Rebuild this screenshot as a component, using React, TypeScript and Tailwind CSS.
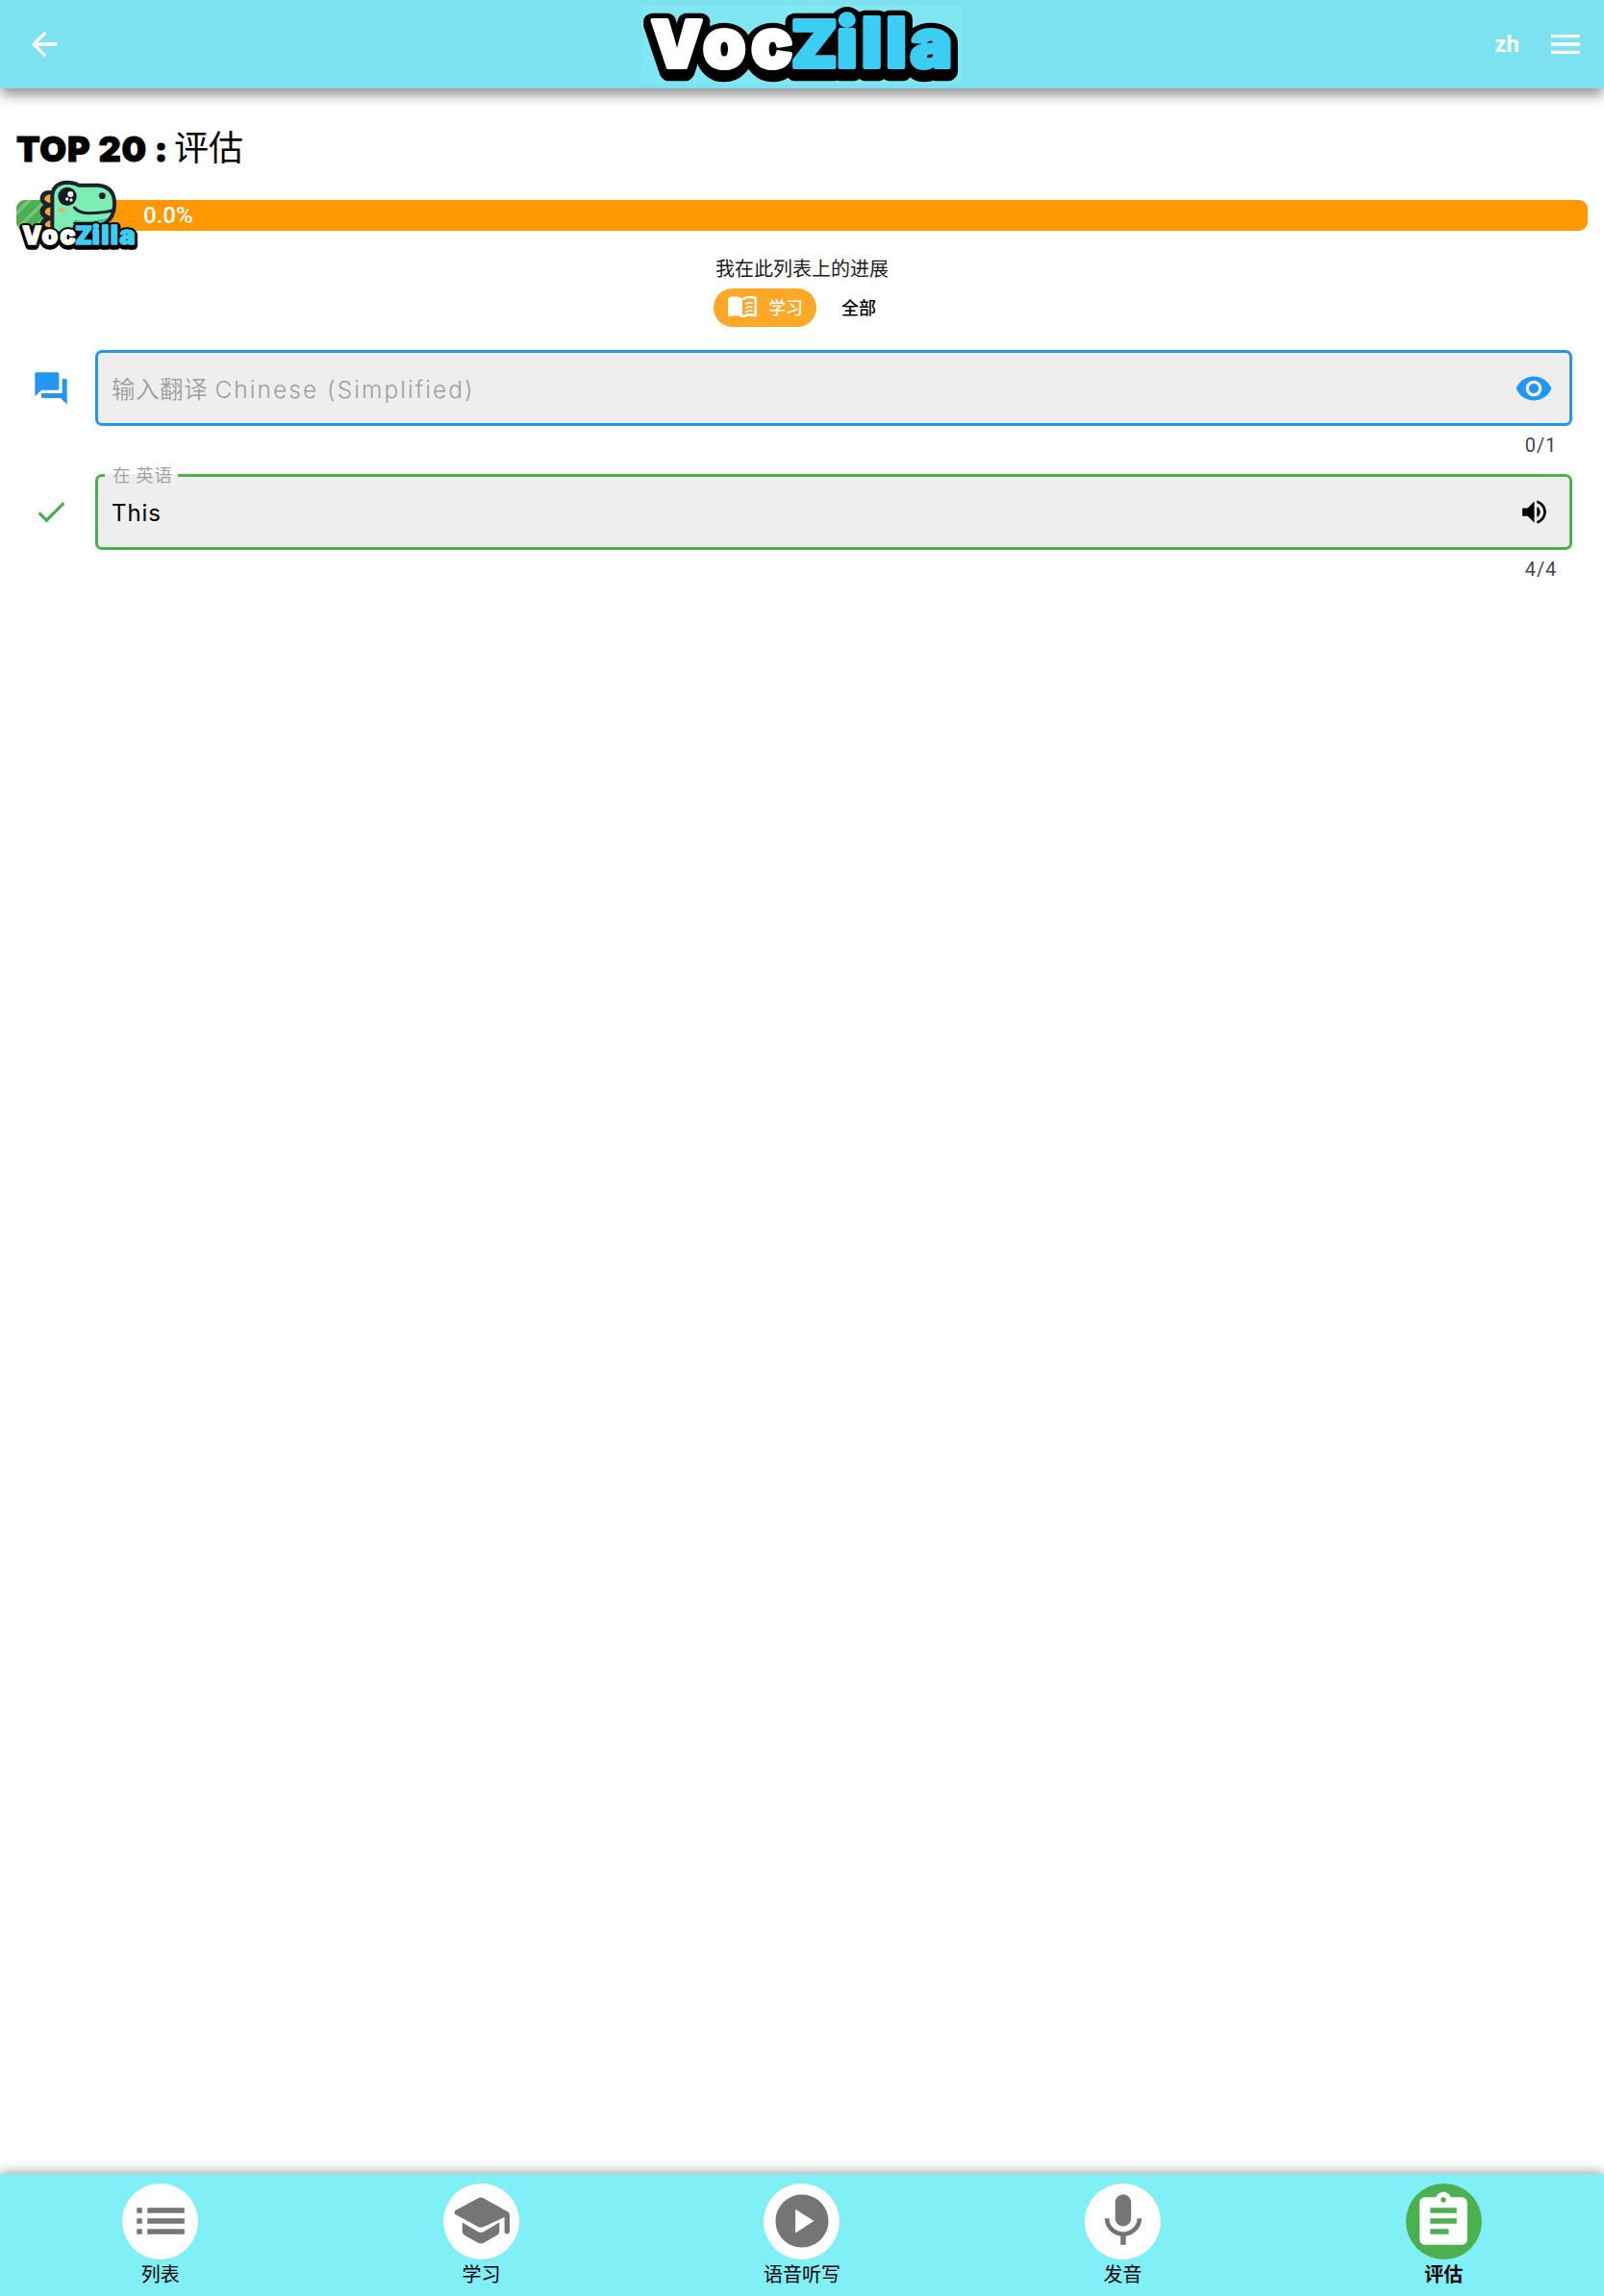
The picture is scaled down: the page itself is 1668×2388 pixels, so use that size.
import type { ReactNode } from "react";
import {
  MdArrowBack,
  MdAssignment,
  MdCheck,
  MdForum,
  MdList,
  MdMenu,
  MdMic,
  MdPlayCircle,
  MdRemoveRedEye,
  MdVolumeUp,
} from "react-icons/md";

function Wordmark({ id }: { id: string }) {
  return (
    <g fontFamily="Inter, sans-serif" fontWeight={900} strokeLinejoin="round">
      <defs>
        <g id={id + "-voc"}>
          <text y="209" fontSize="202">
            <tspan x="111">V</tspan>
            <tspan fontSize="213" x="273 424">oc</tspan>
          </text>
        </g>
        <g id={id + "-zilla"}>
          <text y="209" fontSize="202" transform="translate(548) scale(1.03 1) translate(-548)">
            <tspan x="548">Z</tspan>
            <tspan fontSize="213" x="686 761 835 909">illa</tspan>
          </text>
        </g>
        <g id={id + "-all"}>
          <use href={"#" + id + "-voc"} />
          <use href={"#" + id + "-zilla"} />
        </g>
      </defs>
      <g fill="#000" stroke="#000" strokeWidth="44">
        <use href={"#" + id + "-all"} x="-6" y="4" />
        <use href={"#" + id + "-all"} x="6" y="4" />
        <use href={"#" + id + "-all"} />
        <use href={"#" + id + "-all"} x="-6" y="16" />
        <use href={"#" + id + "-all"} x="6" y="16" />
        <use href={"#" + id + "-all"} y="22" />
      </g>
      <use href={"#" + id + "-voc"} fill="#fff" stroke="#fff" strokeWidth="12" />
      <use href={"#" + id + "-zilla"} fill="#3bcdf3" stroke="#3bcdf3" strokeWidth="12" />
    </g>
  );
}

function Mascot() {
  return (
    <svg viewBox="0 540 450 252" className="absolute left-[-17px] top-[-28px] h-[84px] w-[150px]">
      <path
        d="M164 600Q134 594 129 617Q128 632 146 639Q129 646 129 660Q130 674 146 681Q130 687 130 702L134 722H166Z"
        fill="#1b2230"
        stroke="#1b2230"
        strokeWidth="9"
        strokeLinejoin="round"
      />
      <g fill="#f9a72f">
        <path d="M159 605Q137 610 139 622Q143 631 159 634Z" />
        <path d="M159 646Q139 652 140 662Q144 671 159 675Z" />
        <path d="M159 686Q140 692 140 703L159 716Z" />
      </g>
      <path
        d="M163 728V612Q164 573 207 569Q231 569 245 578H306Q360 582 357 641Q356 680 325 698Q311 705 295 706V728Z"
        fill="#7cedb3"
        stroke="#1b2230"
        strokeWidth="12"
        strokeLinejoin="round"
      />
      <path d="M232 686Q280 697 335 680Q317 696 290 698H232Z" fill="#35b985" />
      <path d="M229 690H300" stroke="#1b2230" strokeWidth="6" transform="translate(0 6)" />
      <path d="M232 648Q246 664 274 665Q318 665 350 657" fill="none" stroke="#1b2230" strokeWidth="9" strokeLinecap="round" />
      <ellipse cx="210" cy="613" rx="29" ry="29" fill="#111a24" />
      <circle cx="220" cy="606" r="9" fill="#fff" />
      <circle cx="209" cy="621" r="5" fill="#fff" />
      <circle cx="222" cy="624" r="5" fill="#e6f6ff" />
      <circle cx="319" cy="611" r="10" fill="#1b2230" />
      <ellipse cx="193" cy="656" rx="10" ry="7" fill="#f5ae4e" transform="rotate(15 193 656)" />
      <g transform="translate(28.4 685) scale(.3747)">
        <Wordmark id="small" />
      </g>
    </svg>
  );
}

function SchoolIcon() {
  return (
    <svg viewBox="-33 -33 66 66" className="size-[66px]" fill="currentColor">
      <path d="M-3.2-23.5Q0-25.3 3.2-23.5L28-9.8Q30-8.5 30-6.5V10.6Q30 13.4 27.3 13.4Q24.6 13.4 24.6 10.6V-4L3.2 5.8Q0 7.6-3.2 5.8L-26-6.4Q-29-8.7-26-11.2Z M24.6-5V-4L3 6.2Z" />
      <path d="M-19.3 1.6L-3.2 10.9Q0 12.7 3.2 10.9L19.3 1.6V10.6Q19.3 13.4 17 14.8L3.2 22.5Q0 24.3-3.2 22.5L-17 14.8Q-19.3 13.4-19.3 10.6Z" />
    </svg>
  );
}

function BookIcon() {
  return (
    <svg viewBox="0 0 30 24" className="h-6 w-[30px]">
      <path d="M0 3Q0 1.5 1.5 1.2Q9-1 15 2.6V22.3Q9 18.6 1.8 21.2Q0 21.5 0 20Z" fill="#fff" />
      <path d="M15 3.2Q21-.4 28.8 2V20.2Q21 18 15 21.4" fill="none" stroke="#fff" strokeWidth="2.6" strokeLinejoin="round" />
      <path d="M18 8.2Q21.500 6.400 25.500 7M18 12.400Q21.500 10.600 25.500 11.200M18 16.600Q21.500 14.800 25.500 15.400" fill="none" stroke="#fff" strokeWidth="1.7" />
    </svg>
  );
}

function NavItem({ label, active, children }: { label: string; active?: boolean; children: ReactNode }) {
  return (
    <div className="flex flex-1 flex-col items-center pt-[10px]">
      <div
        className={
          active
            ? "flex size-[79px] items-center justify-center rounded-full bg-[#4caf50] text-white"
            : "flex size-[79px] items-center justify-center rounded-full bg-white text-[#757575]"
        }
      >
        <div className="-translate-y-px">{children}</div>
      </div>
      <div className={active ? "mt-[1px] text-[20px] font-bold leading-[30px]" : "mt-[1px] text-[20px] leading-[30px]"}>
        {label}
      </div>
    </div>
  );
}

export default function App() {
  return (
    <div className="flex h-[2388px] w-[1668px] flex-col overflow-hidden bg-white font-['Roboto','Noto_Sans_CJK_SC',sans-serif] text-black">
      <header className="relative z-10 flex h-[92px] shrink-0 items-center bg-[#7de2ef] text-white shadow-[0_8px_12px_-1px_rgba(0,0,0,0.42)]">
        <div className="flex w-[667px] pl-[26px]">
          <MdArrowBack size={40} />
        </div>
        <div className="h-[82px] w-[334px] bg-[#80e6f2]">
          <svg viewBox="81 15 1002 246" className="h-[82px] w-[334px] overflow-visible">
            <Wordmark id="main" />
          </svg>
        </div>
        <div className="flex w-[667px] items-center justify-end gap-7 pr-5">
          <span className="text-[24px] font-bold leading-none">zh</span>
          <MdMenu size={40} />
        </div>
      </header>

      <main className="flex flex-1 flex-col px-[17px] pt-[36px]">
        <h1 className="flex h-[54px] items-center text-[36px] leading-[54px]">
          <span className="w-[164px] whitespace-nowrap font-['Inter',sans-serif] font-black tracking-[0.8px] [-webkit-text-stroke:1px_#000]">TOP 20 :</span>
          <span>评估</span>
        </h1>

        <div className="relative mt-[26px] flex h-8 items-center rounded-[9px] bg-[#ff9800]">
          <div className="h-8 w-[80px] rounded-l-[9px] bg-[#4caf50] bg-[repeating-linear-gradient(135deg,transparent_0_8px,rgba(255,255,255,0.25)_8px_12px)]" />
          <Mascot />
          <span className="ml-[52px] text-[24px] font-medium leading-none text-white">0.0%</span>
        </div>

        <p className="mt-[25px] text-center text-[20px] leading-[30px] text-[#1d1b20]">我在此列表上的进展</p>

        <div className="mt-[5px] flex h-10 pl-[725px] text-[18px] font-medium">
          <div className="flex w-[107px] items-center rounded-full bg-[#ffa726] pl-[15px] text-white">
            <BookIcon />
            <span className="ml-3 pt-px">学习</span>
          </div>
          <div className="flex items-center pl-[26px] pt-px">全部</div>
        </div>

        <section className="mt-6 flex">
          <div className="flex h-[79px] w-[82px] items-center pl-4 text-[#2196f3]">
            <MdForum size={40} />
          </div>
          <div className="w-[1536px]">
            <div className="flex h-[79px] items-center justify-between rounded-[7px] border-[3px] border-[#2196f3] bg-[#eee] pl-[14px] pr-[17px]">
              <span className="pt-[3px] font-['Inter','Noto_Sans_CJK_SC',sans-serif] text-[24.5px] font-[350] tracking-[0.5px] text-[#9e9e9e]">
                输入翻译 <span className="tracking-[2.05px]">Chinese (Simplified)</span>
              </span>
              <MdRemoveRedEye size={40} className="text-[#2196f3]" />
            </div>
            <div className="flex h-[50px] justify-end pr-4 pt-[7px] text-[20px] leading-[26px] tracking-[0.8px] text-[#49454f]">0/1</div>
          </div>
        </section>

        <section className="flex">
          <div className="flex h-[79px] w-[82px] items-center pl-[17px] text-[#4caf50]">
            <MdCheck size={38.4} />
          </div>
          <div className="w-[1536px]">
            <div className="relative flex h-[79px] items-center justify-between rounded-[7px] border-[3px] border-[#4caf50] bg-[#eee] pl-[14px] pr-[20px]">
              <span className="absolute left-[7px] top-[-3px] flex h-[3px] w-[76px] items-center bg-[#eee] pl-[8px] pt-[3px] text-[18.5px] font-[350] tracking-[0.6px] text-[#9e9e9e]">
                在 英语
              </span>
              <span className="pt-[3px] font-['Inter','Noto_Sans_CJK_SC',sans-serif] text-[24px] tracking-[0.9px]">This</span>
              <MdVolumeUp size={33} />
            </div>
            <div className="flex h-[50px] justify-end pr-4 pt-[7px] text-[20px] leading-[26px] tracking-[0.8px] text-[#49454f]">4/4</div>
          </div>
        </section>
      </main>

      <nav className="flex h-[127px] shrink-0 bg-[#80eff6] shadow-[0_-1px_12px_rgba(0,0,0,0.42)]">
        <NavItem label="列表">
          <MdList size={66} />
        </NavItem>
        <NavItem label="学习">
          <SchoolIcon />
        </NavItem>
        <NavItem label="语音听写">
          <MdPlayCircle size={66} />
        </NavItem>
        <NavItem label="发音">
          <MdMic size={66} />
        </NavItem>
        <NavItem label="评估" active>
          <MdAssignment size={66} />
        </NavItem>
      </nav>
    </div>
  );
}
